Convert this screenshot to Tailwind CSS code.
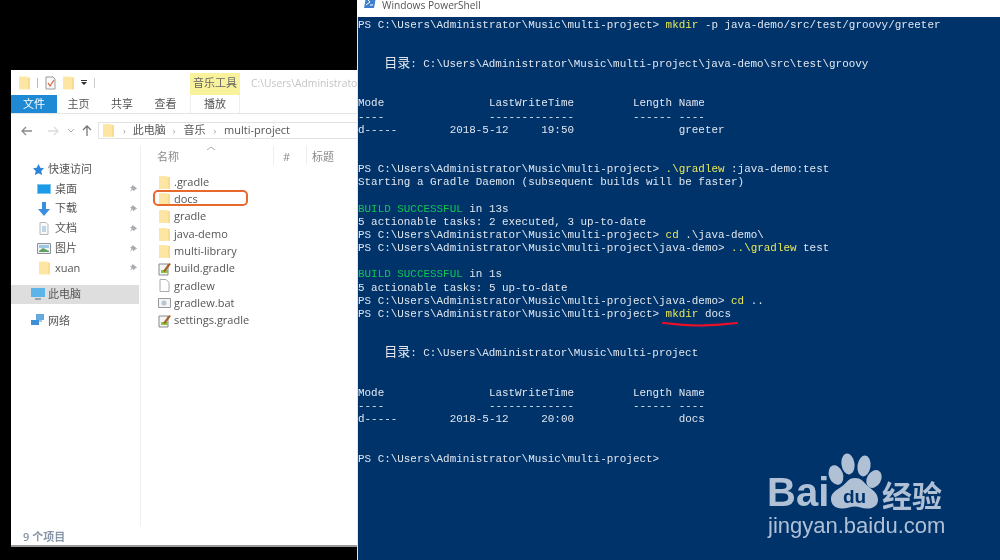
<!DOCTYPE html>
<html lang="zh-CN">
<head>
  <meta charset="UTF-8" />
  <title>multi-project</title>
  <script src="https://cdn.jsdelivr.net/npm/@tailwindcss/browser@4"></script>
</head>
<body class="bg-black">
  <svg width="0" height="0" class="absolute">
    <symbol id="folder" viewBox="0 0 12 14">
      <path d="M0 0h9v14H0z" fill="#fde6a4"/>
      <path d="M9 1h3v13H9z" fill="#fbdc8c"/>
    </symbol>
    <symbol id="script" viewBox="0 0 13 14">
      <path d="M1 2h9v11H1z" fill="#f4f4f4" stroke="#8a8a8a"/>
      <path d="M3 8l7 0v3H3z" fill="#8cc63f"/>
      <path d="M5 9l6-8 2 1-6 8z" fill="#a5602a"/>
    </symbol>
    <symbol id="pin" viewBox="0 0 10 10">
      <path d="M4 1l5 4-2 1-2 2-1-2-3 3 2-4-2-1 2-1z" fill="#a9adb3"/>
    </symbol>
  </svg>

  <div class="relative w-[1000px] h-[560px] flex overflow-hidden bg-black font-['Open_Sans','Noto_Sans_CJK_SC',sans-serif]">

    <!-- Explorer -->
    <div class="w-[357px] shrink-0 pl-[11px] pt-[70px]">
      <div class="h-[477px] bg-white border-b-2 border-[#9a9a9a] flex flex-col text-[11px] text-[#555] blur-[0.4px]">

        <!-- Quick access toolbar -->
        <div class="h-[25px] shrink-0 flex items-end">
          <div class="w-[179px] h-[22px] flex items-center pl-[8px] pb-[3px] gap-[7px]">
            <svg class="w-[11px] h-[14px]"><use href="#folder"/></svg>
            <span class="w-px h-[10px] bg-[#bbb]"></span>
            <svg class="w-[11px] h-[14px]" viewBox="0 0 11 14"><path d="M1 1h7l2 2v10H1z" fill="#fafafa" stroke="#999"/><path d="M3 7l2 3 4-6" fill="none" stroke="#e0603a" stroke-width="1.2"/></svg>
            <svg class="w-[11px] h-[14px]"><use href="#folder"/></svg>
            <svg class="w-[6px] h-[6px]" viewBox="0 0 6 6"><path d="M0 0h6v1H0zM0 2h6L3 5z" fill="#333"/></svg>
            <span class="w-px h-[10px] bg-[#ccc]"></span>
          </div>
          <div class="w-[50px] h-[22px] bg-[#f8f29c] flex items-center justify-center pb-[1px] text-[#666]">音乐工具</div>
          <div class="pl-[11px] h-[22px] flex items-center text-[10.3px] text-[#c4c4c4] whitespace-nowrap w-[117px]">C:\Users\Administrato</div>
        </div>

        <!-- Ribbon tabs -->
        <div class="h-[18px] shrink-0 flex items-center">
          <div class="w-[46px] h-full bg-[#1e8ad6] text-white flex items-center justify-center">文件</div>
          <div class="w-[43px] text-center">主页</div>
          <div class="w-[44px] text-center">共享</div>
          <div class="w-[43px] text-center">查看</div>
          <div class="ml-[3px] w-[50px] h-full text-center leading-[18px] border-x border-[#eee]">播放</div>
        </div>

        <!-- Ribbon edge -->
        <div class="h-[9px] shrink-0 border-t border-[#e4e4e4]"></div>

        <!-- Address bar -->
        <div class="h-[17px] shrink-0 flex items-center">
          <div class="w-[87px] shrink-0 flex items-center text-[#8b8b8b]">
            <svg class="ml-[10px] w-[12px] h-[10px]" viewBox="0 0 12 10"><path d="M11 5H2M5 1L1 5l4 4" fill="none" stroke="#8b8b8b" stroke-width="1.3"/></svg>
            <svg class="ml-[14px] w-[12px] h-[10px]" viewBox="0 0 12 10"><path d="M1 5h9M7 1l4 4-4 4" fill="none" stroke="#dcdcdc" stroke-width="1.3"/></svg>
            <svg class="ml-[9px] w-[6px] h-[4px]" viewBox="0 0 6 4"><path d="M0 0l3 3 3-3" fill="none" stroke="#aaa"/></svg>
            <svg class="ml-[8px] w-[10px] h-[11px]" viewBox="0 0 10 11"><path d="M5 11V2M1 5l4-4 4 4" fill="none" stroke="#777" stroke-width="1.3"/></svg>
          </div>
          <div class="flex-1 h-full border border-r-0 border-[#e2e2e2] flex items-center pl-[4px] whitespace-nowrap">
            <svg class="w-[11px] h-[13px]"><use href="#folder"/></svg>
            <span class="ml-[9px] mr-[7px] text-[#999] text-[9px]">›</span>
            <span class="w-[33px]">此电脑</span>
            <span class="ml-[7px] mr-[8px] text-[#999] text-[9px]">›</span>
            <span class="w-[22px]">音乐</span>
            <span class="ml-[8px] mr-[8px] text-[#999] text-[9px]">›</span>
            <span>multi-project</span>
          </div>
        </div>

        <!-- Panes -->
        <div class="flex-1 flex mt-[7px] min-h-0">
          <div class="w-[130px] shrink-0 border-r border-[#f0f0f0] pt-[13px]">
            <div class="h-[20px] flex items-center pl-[22px] gap-[4px]">
              <svg class="w-[11px] h-[11px]" viewBox="0 0 12 12"><path d="M6 0l2 4 4 .5-3 3 1 4.500-4-2-4 2 1-4.500-3-3 4-.5z" fill="#2c86d8"/></svg>
              <span>快速访问</span>
            </div>
            <div class="h-[19.75px] flex items-center pl-[26px]">
              <span class="w-[14px] h-[10px] bg-[#1c9be8] border border-[#7cc4ee]"></span>
              <span class="ml-[4px] flex-1">桌面</span>
              <svg class="w-[9px] h-[9px] mr-[2px]"><use href="#pin"/></svg>
            </div>
            <div class="h-[19.75px] flex items-center pl-[26px]">
              <svg class="w-[14px] h-[14px]" viewBox="0 0 14 14"><path d="M5 0h4v7h4l-6 7-6-7h4z" fill="#3a8ee0"/></svg>
              <span class="ml-[4px] flex-1">下载</span>
              <svg class="w-[9px] h-[9px] mr-[2px]"><use href="#pin"/></svg>
            </div>
            <div class="h-[19.75px] flex items-center pl-[26px]">
              <svg class="w-[14px] h-[13px]" viewBox="0 0 14 13"><path d="M3 .5h6l2 2v10H3z" fill="#f6f8fa" stroke="#b5b9bd"/><path d="M5 5h4M5 7h4M5 9h4" stroke="#7fb4de"/></svg>
              <span class="ml-[4px] flex-1">文档</span>
              <svg class="w-[9px] h-[9px] mr-[2px]"><use href="#pin"/></svg>
            </div>
            <div class="h-[19.75px] flex items-center pl-[26px]">
              <svg class="w-[14px] h-[11px]" viewBox="0 0 14 11"><path d="M.5.500h13v10H.5z" fill="#eef1f4" stroke="#8d9299"/><path d="M2 8l4-3 6 3v1H2z" fill="#5fa05f"/><path d="M2 2h10v3H2z" fill="#9cc6e6"/></svg>
              <span class="ml-[4px] flex-1">图片</span>
              <svg class="w-[9px] h-[9px] mr-[2px]"><use href="#pin"/></svg>
            </div>
            <div class="h-[19.75px] flex items-center pl-[28px]">
              <svg class="w-[11px] h-[14px]"><use href="#folder"/></svg>
              <span class="ml-[5px] flex-1">xuan</span>
              <svg class="w-[9px] h-[9px] mr-[2px]"><use href="#pin"/></svg>
            </div>
            <div class="mt-[7px] h-[19px] bg-[#dedede] mr-[1px] flex items-center pl-[20px]">
              <svg class="w-[14px] h-[13px]" viewBox="0 0 14 13"><path d="M0 0h14v9H0z" fill="#5cb4e8"/><path d="M4 10h6v2H4z" fill="#9aa5ad"/></svg>
              <span class="ml-[3px]">此电脑</span>
            </div>
            <div class="mt-[7px] h-[20px] flex items-center pl-[20px]">
              <svg class="w-[14px] h-[13px]" viewBox="0 0 14 13"><path d="M5 0h8v6H5z" fill="#66a9dc"/><path d="M0 6h8v5H0z" fill="#3f8fd6"/><path d="M8 6h3v2H8z" fill="#9cc6e6"/></svg>
              <span class="ml-[3px]">网络</span>
            </div>
          </div>

          <div class="relative flex-1 min-w-0">
            <div class="h-[20px] flex items-end pb-[1px] text-[#8a8a8a] relative">
              <svg class="absolute left-[66px] top-0 w-[8px] h-[4px]" viewBox="0 0 8 4"><path d="M0 4l4-3 4 3" fill="none" stroke="#aaa"/></svg>
              <span class="ml-[16px] w-[116px]">名称</span>
              <span class="border-l border-[#eee] pl-[9px] w-[33px] h-full flex items-end">#</span>
              <span class="border-l border-[#eee] pl-[5px] h-full flex items-end">标题</span>
            </div>
            <ul class="pt-[7.500px] text-[11px]">
              <li class="h-[17.3px] flex items-center pl-[18px] gap-[4px]"><svg class="w-[11px] h-[13px]"><use href="#folder"/></svg>.gradle</li>
              <li class="h-[17.3px] flex items-center pl-[18px] gap-[4px]"><svg class="w-[11px] h-[13px]"><use href="#folder"/></svg>docs</li>
              <li class="h-[17.3px] flex items-center pl-[18px] gap-[4px]"><svg class="w-[11px] h-[13px]"><use href="#folder"/></svg>gradle</li>
              <li class="h-[17.3px] flex items-center pl-[18px] gap-[4px]"><svg class="w-[11px] h-[13px]"><use href="#folder"/></svg>java-demo</li>
              <li class="h-[17.3px] flex items-center pl-[18px] gap-[4px]"><svg class="w-[11px] h-[13px]"><use href="#folder"/></svg>multi-library</li>
              <li class="h-[17.3px] flex items-center pl-[17px] gap-[3px]"><svg class="w-[13px] h-[14px]"><use href="#script"/></svg>build.gradle</li>
              <li class="h-[17.3px] flex items-center pl-[18px] gap-[4px]"><svg class="w-[11px] h-[13px]" viewBox="0 0 11 13"><path d="M1 .5h6l3 3v9H1z" fill="#fff" stroke="#aaa"/></svg>gradlew</li>
              <li class="h-[17.3px] flex items-center pl-[17px] gap-[3px]"><svg class="w-[13px] h-[12px]" viewBox="0 0 13 12"><path d="M.5 1.500h12v9H.500z" fill="#f2f4f6" stroke="#999"/><circle cx="6" cy="6" r="2.500" fill="#b8c4d0"/></svg>gradlew.bat</li>
              <li class="h-[17.3px] flex items-center pl-[17px] gap-[3px]"><svg class="w-[13px] h-[14px]"><use href="#script"/></svg>settings.gradle</li>
            </ul>
            <div class="absolute left-[12px] top-[44px] w-[95px] h-[16px] rounded-[5px] border-2 border-[#e8692d]"></div>
          </div>
        </div>

        <!-- Status bar -->
        <div class="h-[19px] shrink-0 pl-[12px] pt-[3px] flex items-center font-semibold text-[#8896a8]">9 个项目</div>
      </div>
    </div>

    <!-- PowerShell -->
    <div class="flex-1 flex flex-col min-w-0">
      <div class="h-[17px] shrink-0 bg-white flex items-end overflow-hidden pl-[7px] pb-[5px] gap-[6px] text-[10.2px] leading-[14px] text-[#555] blur-[0.3px]">
        <svg class="w-[12px] h-[11px] mb-[4px]" viewBox="0 0 12 11"><path d="M2 0h10l-2 11H0z" fill="#3f7fcf"/><path d="M3 2l3 3-4 3M6 8h3" fill="none" stroke="#fff"/></svg>
        <span>Windows PowerShell</span>
      </div>
      <pre class="flex-1 bg-[#01336b] border-l border-[#dfe6ee] pt-[1.5px] text-[10.92px] leading-[13.15px] text-[#dfe6ee] font-['Liberation_Mono','Noto_Sans_CJK_SC',monospace] blur-[0.4px] overflow-hidden">PS C:\Users\Administrator\Music\multi-project&gt; <span class="text-[#e8e85a]">mkdir</span> -p java-demo/src/test/groovy/greeter


    <span class="text-[13px] leading-[0]">目录</span>: C:\Users\Administrator\Music\multi-project\java-demo\src\test\groovy


Mode                LastWriteTime         Length Name
----                -------------         ------ ----
d-----        2018-5-12     19:50                greeter


PS C:\Users\Administrator\Music\multi-project&gt; <span class="text-[#e8e85a]">.\gradlew</span> :java-demo:test
Starting a Gradle Daemon (subsequent builds will be faster)

<span class="text-[#10c455]">BUILD SUCCESSFUL</span> in 13s
5 actionable tasks: 2 executed, 3 up-to-date
PS C:\Users\Administrator\Music\multi-project&gt; <span class="text-[#e8e85a]">cd</span> .\java-demo\
PS C:\Users\Administrator\Music\multi-project\java-demo&gt; <span class="text-[#e8e85a]">..\gradlew</span> test

<span class="text-[#10c455]">BUILD SUCCESSFUL</span> in 1s
5 actionable tasks: 5 up-to-date
PS C:\Users\Administrator\Music\multi-project\java-demo&gt; <span class="text-[#e8e85a]">cd</span> ..
PS C:\Users\Administrator\Music\multi-project&gt; <span class="text-[#e8e85a]">mkdir</span> docs


    <span class="text-[13px] leading-[0]">目录</span>: C:\Users\Administrator\Music\multi-project


Mode                LastWriteTime         Length Name
----                -------------         ------ ----
d-----        2018-5-12     20:00                docs


PS C:\Users\Administrator\Music\multi-project&gt;</pre>
    </div>

    <!-- Red underline drawn over the console -->
    <svg class="absolute left-[660px] top-[318px] w-[80px] h-[10px]" viewBox="0 0 80 10"><path d="M3 5c12 1 22 2.500 36 2.500 14 0 24-1.500 38-2.500" fill="none" stroke="#e8102a" stroke-width="2.200" stroke-linecap="round"/></svg>

    <!-- Watermark -->
    <div class="absolute left-[767px] top-[453px] w-[190px] h-[90px] text-[#b0c1d6] blur-[0.3px]">
      <span class="absolute left-0 top-[16px] text-[40px] leading-[46px] font-bold font-['Liberation_Sans',sans-serif]">Bai</span>
      <svg class="absolute left-[58px] top-0 w-[62px] h-[58px]" viewBox="0 0 62 58">
        <ellipse cx="11" cy="22" rx="7" ry="10" transform="rotate(-20 11 22)" fill="currentColor"/>
        <ellipse cx="23" cy="11" rx="6.500" ry="10.500" transform="rotate(-8 23 11)" fill="currentColor"/>
        <ellipse cx="39" cy="13" rx="6.500" ry="10.500" transform="rotate(8 39 13)" fill="currentColor"/>
        <ellipse cx="49" cy="26" rx="7" ry="9.500" transform="rotate(30 49 26)" fill="currentColor"/>
        <path d="M30 25c7 0 9 5 14 9 5 4 9 7 9 13 0 6-6 9-11 8.500-5 0-8-2-12-2s-8 2-13 2c-7 0-11-4-11-9.500s4-8 10-12c6-4 7-9 14-9z" fill="currentColor"/>
      </svg>
      <span class="absolute left-[76px] top-[32px] text-[19px] leading-[24px] font-bold text-[#01336b] font-['Liberation_Sans',sans-serif]">du</span>
      <span class="absolute left-[115px] top-[24px] text-[30px] leading-[34px] font-bold whitespace-nowrap font-['Noto_Sans_CJK_SC',sans-serif]">经验</span>
      <span class="absolute left-[1px] top-[60px] text-[22px] leading-[26px] whitespace-nowrap font-['Liberation_Sans',sans-serif]">jingyan.baidu.com</span>
    </div>
  </div>
</body>
</html>
